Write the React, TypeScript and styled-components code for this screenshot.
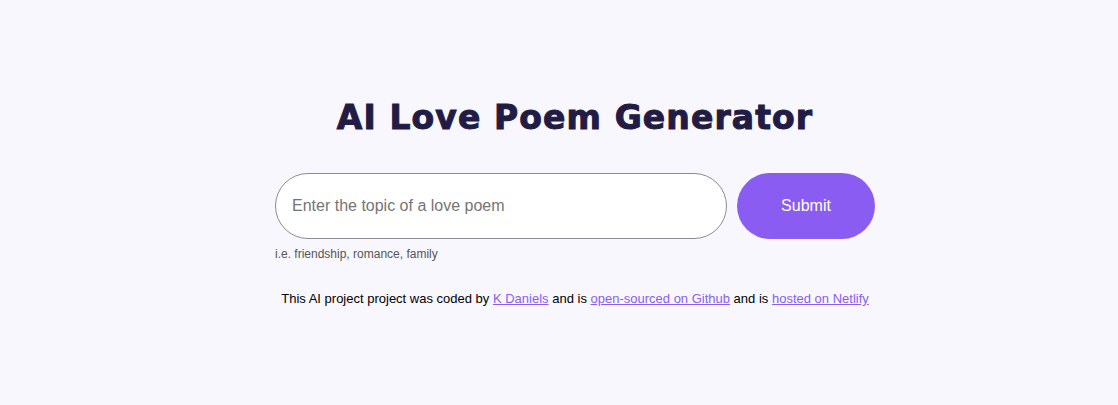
import React from "react";
import styled, { createGlobalStyle } from "styled-components";

const GlobalStyle = createGlobalStyle`
  html, body {
    margin: 0;
    padding: 0;
    background: #f8f7fd;
  }
  body {
    font-family: "Liberation Sans", Arial, sans-serif;
  }
`;

const Page = styled.main`
  min-height: 405px;
  box-sizing: border-box;
  padding: 96px 0 0 32px;
  display: flex;
  justify-content: center;
`;

const Container = styled.div`
  width: 600px;
  display: flex;
  flex-direction: column;
  align-items: stretch;
`;

const Title = styled.h1`
  margin: 0;
  text-align: center;
  font-family: "DejaVu Sans", "Liberation Sans", sans-serif;
  font-weight: 900;
  font-size: 33px;
  line-height: 44px;
  letter-spacing: 1.1px;
  -webkit-text-stroke: 1px #221c44;
  color: #221c44;
  white-space: nowrap;
`;

const Form = styled.form`
  margin-top: 33px;
  display: flex;
  gap: 10px;
`;

const Input = styled.input`
  flex: 1;
  height: 66px;
  box-sizing: border-box;
  border: 1px solid #8c8a96;
  border-radius: 33px;
  background: #fff;
  padding: 0 16px;
  font-family: "Liberation Sans", Arial, sans-serif;
  font-size: 16px;
  color: #333;
  outline: none;
  &::placeholder {
    color: #757575;
  }
`;

const Button = styled.button`
  width: 138px;
  height: 66px;
  border: none;
  border-radius: 33px;
  background: #8b5cf2;
  color: #fff;
  font-family: "Liberation Sans", Arial, sans-serif;
  font-size: 16px;
  cursor: pointer;
`;

const Hint = styled.div`
  margin-top: 8px;
  font-size: 12px;
  color: #555;
`;

const Footer = styled.footer`
  margin-top: 30px;
  text-align: center;
  font-size: 13px;
  color: #000;
  white-space: nowrap;
`;

const Link = styled.a`
  color: #8b5cf2;
  text-decoration: underline;
`;

export default function App() {
  return (
    <>
      <GlobalStyle />
      <Page>
        <Container>
          <Title>AI Love Poem Generator</Title>
          <Form onSubmit={(e) => e.preventDefault()}>
            <Input placeholder="Enter the topic of a love poem" />
            <Button type="submit">Submit</Button>
          </Form>
          <Hint>i.e. friendship, romance, family</Hint>
          <Footer>
            This AI project project was coded by <Link href="#">K Daniels</Link> and is{" "}
            <Link href="#">open-sourced on Github</Link> and is{" "}
            <Link href="#">hosted on Netlify</Link>
          </Footer>
        </Container>
      </Page>
    </>
  );
}
